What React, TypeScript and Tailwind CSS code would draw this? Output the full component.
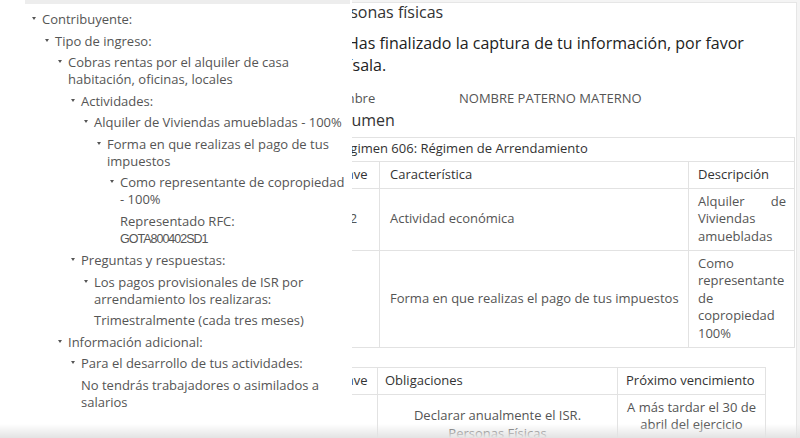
import type { ReactNode } from "react";

type TreeNode = {
  label: string;
  children?: TreeNode[];
  value?: ReactNode;
};

const TREE: TreeNode = {
  label: "Contribuyente:",
  children: [
    {
      label: "Tipo de ingreso:",
      children: [
        {
          label: "Cobras rentas por el alquiler de casa habitación, oficinas, locales",
          children: [
            {
              label: "Actividades:",
              children: [
                {
                  label: "Alquiler de Viviendas amuebladas - 100%",
                  children: [
                    {
                      label: "Forma en que realizas el pago de tus impuestos",
                      children: [
                        {
                          label: "Como representante de copropiedad - 100%",
                          value: (
                            <>
                              Representado RFC:
                              <br />
                              <span className="font-['Liberation_Sans',Arial,sans-serif] text-[12.5px] tracking-[-1px]">
                                GOTA800402SD1
                              </span>
                            </>
                          ),
                        },
                      ],
                    },
                  ],
                },
              ],
            },
            {
              label: "Preguntas y respuestas:",
              children: [
                {
                  label: "Los pagos provisionales de ISR por arrendamiento los realizaras:",
                  value: "Trimestralmente (cada tres meses)",
                },
              ],
            },
          ],
        },
        {
          label: "Información adicional:",
          children: [
            {
              label: "Para el desarrollo de tus actividades:",
              value: "No tendrás trabajadores o asimilados a salarios",
            },
          ],
        },
      ],
    },
  ],
};

function Node({ node }: { node: TreeNode }) {
  return (
    <div className="mt-[4.5px]">
      <div className="flex">
        <span className="w-[10px] shrink-0">
          <span className="mt-[6px] block h-0 w-0 border-x-[2.5px] border-t-[3.5px] border-x-transparent border-t-[#555]" />
        </span>
        <span className="min-w-0 flex-1">{node.label}</span>
      </div>
      {node.children && (
        <div className="pl-[13px]">
          {node.children.map((c) => (
            <Node key={c.label} node={c} />
          ))}
        </div>
      )}
      {node.value && <div className="mt-[4.5px] pl-[10px]">{node.value}</div>}
    </div>
  );
}

const cell = "border border-[#e2e2e2] px-[8px] pt-[4px] pb-[4.5px] align-middle";
const head = `${cell} text-left font-normal text-[#333]`;

export default function App() {
  return (
    <div className="relative flex h-[438px] w-[800px] overflow-hidden bg-white font-['Open_Sans',sans-serif] text-[13px] leading-[17.5px] text-[#555]">
      {/* tree popover */}
      <aside className="w-[352px] shrink-0 pr-[2px] leading-[17px]">
        <div className="ml-[25px] h-[4px] bg-[#ededed]" />
        <div className="pt-[2.7px] pl-[32px]">
          <Node node={TREE} />
        </div>
      </aside>

      {/* page behind, clipped on the left */}
      <div className="flex min-w-0 flex-1 bg-[#f4f4f4]">
        <main className="mt-[2px] w-[445px] shrink-0 overflow-hidden border-t border-r border-[#e6e6e6] bg-white">
          <div className="-ml-[27px] w-[472px]">
            <h1 className="mt-[1px] text-[16px] leading-[16px] font-normal text-[#333]">Personas físicas</h1>
            <p className="mt-[11.5px] indent-[22px] text-[16px] leading-[22px] text-[#222]">
              Has finalizado la captura de tu información, por favor revísala.
            </p>
            <div className="mt-[13px] flex leading-[18px]">
              <span className="w-[134px]">Nombre</span>
              <span>NOMBRE PATERNO MATERNO</span>
            </div>
            <h2 className="mt-[4px] text-[16px] leading-[18px] font-normal text-[#333]">Resumen</h2>

            <table className="mt-[8px] ml-[1px] w-[468px] table-fixed border-collapse">
              <colgroup>
                <col className="w-[53px]" />
                <col className="w-[309px]" />
                <col className="w-[106px]" />
              </colgroup>
              <thead>
                <tr>
                  <th colSpan={3} className="border border-[#e2e2e2] px-[8px] pt-[2.5px] pb-[3px] text-left font-normal text-[#333]">
                    Régimen 606: Régimen de Arrendamiento
                  </th>
                </tr>
                <tr>
                  <th className={head}>Clave</th>
                  <th className={`${head} pl-[10px]`}>Característica</th>
                  <th className={`${head} pl-[9px]`}>Descripción</th>
                </tr>
              </thead>
              <tbody>
                <tr>
                  <td className={cell}>682</td>
                  <td className={`${cell} pl-[10px]`}>Actividad económica</td>
                  <td className={`${cell} pl-[9px] text-justify`}>Alquiler de Viviendas amuebladas</td>
                </tr>
                <tr>
                  <td className={cell}></td>
                  <td className={`${cell} pl-[10px]`}>Forma en que realizas el pago de tus impuestos</td>
                  <td className={`${cell} pl-[9px] text-justify`}>Como representante de copropiedad 100%</td>
                </tr>
              </tbody>
            </table>

            <table className="mt-[19px] ml-[1px] w-[439px] table-fixed border-collapse">
              <colgroup>
                <col className="w-[51px]" />
                <col className="w-[240px]" />
                <col className="w-[148px]" />
              </colgroup>
              <thead>
                <tr>
                  <th className={head}>Clave</th>
                  <th className={`${head} pl-[7px]`}>Obligaciones</th>
                  <th className={head}>Próximo vencimiento</th>
                </tr>
              </thead>
              <tbody>
                <tr>
                  <td className={cell}></td>
                  <td className={`${cell} text-center`}>Declarar anualmente el ISR. Personas Físicas</td>
                  <td className={`${cell} text-center`}>A más tardar el 30 de abril del ejercicio siguiente</td>
                </tr>
              </tbody>
            </table>
          </div>
        </main>
      </div>

      {/* bottom fade over everything */}
      <div className="pointer-events-none absolute inset-x-0 bottom-0 h-[14px] bg-gradient-to-b from-white/0 to-[#e3e3e3]" />
    </div>
  );
}
